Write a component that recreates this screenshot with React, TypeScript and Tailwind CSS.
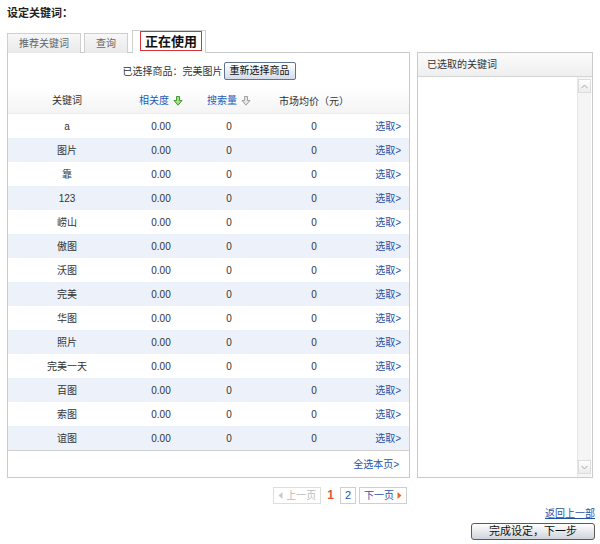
import React from "react";

const rows = ["a", "图片", "靠", "123", "崂山", "傲图", "沃图", "完美", "华图", "照片", "完美一天", "百图", "索图", "谊图"];

function SortArrow({ active }: { active: boolean }) {
  return (
    <svg width="10" height="10" viewBox="0 0 10 10" className="ml-[4px] inline-block">
      <path
        d="M3.5 0.5 H6.5 V4.5 H9 L5 9.2 L1 4.5 H3.5 Z"
        fill={active ? "#a6dc8e" : "#e4e4e4"}
        stroke={active ? "#3f9b2c" : "#a0a0a0"}
        strokeWidth="1"
        strokeLinejoin="round"
      />
    </svg>
  );
}

export default function App() {
  return (
    <div className="w-[600px] h-[544px] bg-white text-[10px] text-[#333] font-[family-name:'Liberation_Sans','Noto_Sans_CJK_SC',sans-serif] px-[7px] pt-[7px]">
      <div className="h-[12px] leading-[12px] text-[11px] font-bold text-[#222]">设定关键词：</div>

      {/* tabs */}
      <div className="relative z-10 mt-[11px] -mb-px flex h-[23px] items-end">
        <div className="flex h-[20px] w-[74px] items-center justify-center border border-b-0 border-[#cfcfcf] bg-gradient-to-b from-[#f7f7f7] to-[#e9e9e9] text-[#666]">
          推荐关键词
        </div>
        <div className="ml-[3px] flex h-[20px] w-[44px] items-center justify-center border border-b-0 border-[#cfcfcf] bg-gradient-to-b from-[#f7f7f7] to-[#e9e9e9] text-[#666]">
          查询
        </div>
        <div className="ml-[4px] h-[23px] w-[74px] border border-b-0 border-[#cfcfcf] bg-white pl-[7px] pt-0">
          <div className="flex h-[20px] w-[62px] items-center justify-center border border-[#d6333a] text-[13px] font-bold leading-none text-[#111]">
            正在使用
          </div>
        </div>
      </div>

      {/* panels */}
      <div className="flex gap-[7px]">
        {/* left panel */}
        <div className="flex h-[426px] w-[403px] flex-col border border-[#cacaca]">
          <div className="flex h-[35px] items-center justify-center pl-[1px]">
            <span className="font-[family-name:'Noto_Sans_CJK_SC',sans-serif]">已选择商品：完美图片</span>
            <button className="ml-[1px] h-[18px] rounded-[2px] border border-[#60728f] bg-gradient-to-b from-[#ffffff] to-[#d4dcea] px-[5px] text-[10px] leading-none text-[#111]">
              重新选择商品
            </button>
          </div>
          <div className="flex h-[26px] items-center border-b border-[#ececec] bg-gradient-to-b from-white to-[#f4f4f4]">
            <div className="w-[118px] text-center">关键词</div>
            <div className="flex w-[70px] items-center justify-center text-[#1f59b8]">
              相关度
              <SortArrow active />
            </div>
            <div className="flex w-[66px] items-center justify-center text-[#1f59b8]">
              搜索量
              <SortArrow active={false} />
            </div>
            <div className="w-[104px] text-center font-[family-name:'Noto_Sans_CJK_SC',sans-serif]">市场均价（元）</div>
            <div className="w-[43px]"></div>
          </div>
          {rows.map((r, i) => (
            <div key={r} className={`flex h-[24px] items-center ${i % 2 === 1 ? "bg-[#edf2fa]" : "bg-white"}`}>
              <div className="w-[118px] text-center">{r}</div>
              <div className="w-[70px] text-center">0.00</div>
              <div className="w-[66px] text-center">0</div>
              <div className="w-[104px] text-center">0</div>
              <div className="w-[43px] pr-[8px] text-right text-[#1f52a8]">选取&gt;</div>
            </div>
          ))}
          <div className="flex flex-1 items-center justify-end border-t border-[#d2d2d2] pr-[10px] text-[#1f52a8]">
            全选本页&gt;
          </div>
        </div>

        {/* right panel */}
        <div className="flex h-[426px] w-[180px] flex-col border border-[#cacaca]">
          <div className="flex h-[24px] items-center border-b border-[#d4d4d4] bg-gradient-to-b from-[#fbfbfb] to-[#efefef] pl-[9px] text-[#333]">
            已选取的关键词
          </div>
          <div className="flex flex-1 justify-end">
            <div className="flex w-[14px] flex-col justify-between border-l border-[#e6e6e6] bg-[#f5f5f5] pt-[2px] pb-[3px] mr-[1px]">
              <div className="flex h-[14px] items-center justify-center border border-[#dcdcdc] bg-gradient-to-b from-white to-[#ececec]">
                <svg width="7" height="5" viewBox="0 0 7 5">
                  <path d="M0.5 4.2 L3.5 1 L6.5 4.2" fill="none" stroke="#a8a8a8" strokeWidth="1" />
                </svg>
              </div>
              <div className="flex h-[14px] items-center justify-center border border-[#dcdcdc] bg-gradient-to-b from-white to-[#ececec]">
                <svg width="7" height="5" viewBox="0 0 7 5">
                  <path d="M0.5 0.8 L3.5 4 L6.5 0.8" fill="none" stroke="#a8a8a8" strokeWidth="1" />
                </svg>
              </div>
            </div>
          </div>
        </div>
      </div>

      {/* pagination */}
      <div className="mt-[8px] flex w-[403px] items-center justify-end pr-[3px]">
        <div className="flex h-[17px] w-[48px] items-center justify-center border border-[#dedede] text-[#bbbbbb]">
          <svg width="5" height="7" viewBox="0 0 5 7" className="mr-[3px]">
            <path d="M4.5 0 V7 L0.5 3.5 Z" fill="#c8c8c8" />
          </svg>
          上一页
        </div>
        <div className="mx-[6px] text-[12px] font-bold text-[#e4572a]">1</div>
        <div className="flex h-[17px] w-[16px] items-center justify-center border border-[#cfcfcf] text-[11px] text-[#1f52a8]">2</div>
        <div className="ml-[3px] flex h-[17px] w-[48px] items-center justify-center border border-[#cfcfcf] text-[#1f52a8]">
          下一页
          <svg width="5" height="7" viewBox="0 0 5 7" className="ml-[3px]">
            <path d="M0.5 0 V7 L4.5 3.5 Z" fill="#f0671c" />
          </svg>
        </div>
      </div>

      <div className="mt-[4px] flex w-[588px] justify-end">
        <span className="text-[#1f52a8] underline underline-offset-1 leading-[12px]">返回上一部</span>
      </div>
      <div className="mt-[3px] flex w-[588px] justify-end">
        <button className="h-[17px] w-[124px] rounded-[3px] border border-[#5a5a5a] bg-gradient-to-b from-[#ffffff] to-[#cfd3da] text-[11px] leading-none text-[#111]">
          完成设定，下一步
        </button>
      </div>
    </div>
  );
}
